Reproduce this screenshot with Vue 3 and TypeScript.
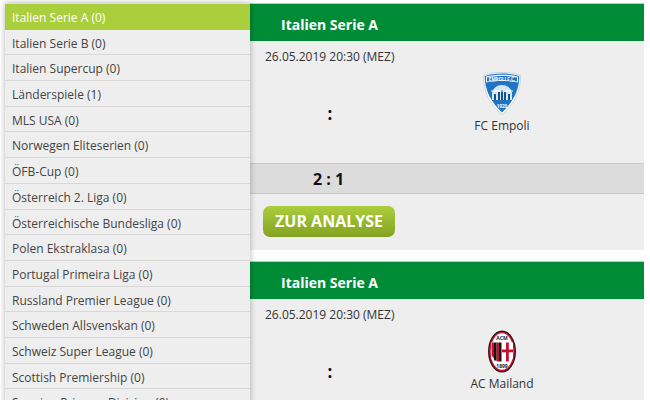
<script setup lang="ts">
const leagues: string[] = [
  'Italien Serie A (0)', 'Italien Serie B (0)', 'Italien Supercup (0)', 'Länderspiele (1)', 'MLS USA (0)',
  'Norwegen Eliteserien (0)', 'ÖFB-Cup (0)', 'Österreich 2. Liga (0)', 'Österreichische Bundesliga (0)',
  'Polen Ekstraklasa (0)', 'Portugal Primeira Liga (0)', 'Russland Premier League (0)', 'Schweden Allsvenskan (0)',
  'Schweiz Super League (0)', 'Scottish Premiership (0)', 'Spanien Primera Division (0)'
]
</script>

<template>
  <div class="page">
    <aside class="side">
      <div v-for="(l, i) in leagues" :key="l" class="row" :class="{ active: i === 0 }">{{ l }}</div>
    </aside>
    <main class="main">
      <section class="card">
        <h2 class="head">Italien Serie A</h2>
        <div class="date">26.05.2019 20:30 (MEZ)</div>
        <div class="teams">
          <div class="colon">:</div>
          <div class="team">
            <svg width="38" height="43" viewBox="0 0 38 43" class="logo">
              <path d="M19 .5 C27 .5 33 1.500 37.500 3.500 C38 19 31 33 19 42.500 C7 33 0 19 .5 3.500 C5 1.500 11 .5 19 .5Z" fill="#fff" stroke="#bfcbd6" stroke-width=".8"/>
              <path d="M19 1.500 C26 1.500 32 2.500 36.300 4.200 C36.300 19 29 31 19 40.500 C9 31 1.700 19 1.700 4.200 C6 2.500 12 1.500 19 1.500Z" fill="#1f74c4"/>
              <path d="M3 4.500 C13 2 25 2 35 4.500 L35 10.500 C25 8.500 13 8.500 3 10.500Z" fill="#fff"/>
              <path d="M4 5.500 C13 3.500 25 3.500 34 5.500 L34 9.500 C25 7.800 13 7.800 4 9.500Z" fill="#1f74c4"/>
              <text x="19" y="8.600" text-anchor="middle" class="tiny" fill="#fff">EMPOLI F.C.</text>
              <path d="M9 21 C10 16 14 13 19 13 C24 13 28 16 29 21 L29 28 L9 28Z" fill="#d5e6f5"/>
              <path d="M11 22h2v6h-2zM15 20h2v8h-2zM21 20h2v8h-2zM25 22h2v6h-2zM18 18h2v10h-2z" fill="#17548f"/>
              <rect x="8" y="18.500" width="22" height="1" fill="#fff"/>
              <text x="19" y="35.500" text-anchor="middle" class="tiny" fill="#fff">1920</text>
            </svg>
            <div class="name">FC Empoli</div>
          </div>
        </div>
        <div class="score"><span>2 : 1</span></div>
        <div class="actions"><a class="btn">ZUR ANALYSE</a></div>
      </section>
      <section class="card">
        <h2 class="head">Italien Serie A</h2>
        <div class="date">26.05.2019 20:30 (MEZ)</div>
        <div class="teams">
          <div class="colon">:</div>
          <div class="team">
            <svg width="28" height="43" viewBox="0 0 28 42" class="logo">
              <ellipse cx="14" cy="21" rx="14" ry="21" fill="#2a1414"/>
              <ellipse cx="14" cy="21" rx="12.800" ry="19.800" fill="#c8102e"/>
              <ellipse cx="14" cy="21" rx="11.300" ry="18.300" fill="#fff"/>
              <text x="14" y="9.500" text-anchor="middle" class="tiny2" fill="#222">ACM</text>
              <path d="M3 12h22v14c0 2-1 4-3 5H6c-2-1-3-3-3-5z" fill="#fff"/>
              <path d="M3.500 12h2.500v16l-2.500-3zM8.500 12h2.500v19h-2.500z" fill="#c8102e"/>
              <path d="M6 12h2.500v18H6zM11 12h2.500v19H11z" fill="#141414"/>
              <rect x="18" y="12" width="2.800" height="19" fill="#c8102e"/>
              <rect x="14" y="19" width="11" height="2.800" fill="#c8102e"/>
              <text x="14" y="37" text-anchor="middle" class="tiny2" fill="#222">1899</text>
            </svg>
            <div class="name">AC Mailand</div>
          </div>
        </div>
      </section>
    </main>
  </div>
</template>

<style>
html, body { margin: 0; background: #fff; overflow: hidden; }
</style>

<style scoped>
.page {
  width: 650px; height: 400px; overflow: hidden; display: flex; align-items: flex-start;
  font-family: "Open Sans", sans-serif; background: #fff; color: #333; box-sizing: border-box; padding-left: 5px;
}
.side {
  position: relative; z-index: 1; width: 245px; flex: none; margin-top: 3px; background: #eee; border-top: 1px solid #ddd;
  box-shadow: 0 0 6px rgba(0, 0, 0, .3);
}
.row {
  height: 25.700px; box-sizing: border-box; border-bottom: 1px solid #d8d8d8; padding: 1px 0 0 7px;
  font-size: 12px; line-height: 26px; color: #444;
}
.row.active { background: #abce3c; color: #fff; border-bottom-color: #abce3c; }
.main { flex: 1; margin: 3px 6px 0 0; display: flex; flex-direction: column; gap: 11px; }
.card { background: #eee; }
.head {
  margin: 0; height: 38px; background: #008b37; border-top: 1px solid #b8cdbd; color: #fff; font-size: 14px; font-weight: 700;
  line-height: 41px; padding-left: 31px; box-sizing: border-box;
}
.date { font-size: 12px; line-height: 16px; padding: 8px 0 0 15px; color: #333; }
.teams { display: grid; grid-template-columns: 160px 1fr; height: 98px; }
.colon { font-size: 17px; font-weight: 700; color: #111; text-align: center; line-height: 20px; padding-top: 39px; }
.team { display: flex; flex-direction: column; align-items: center; width: 160px; margin-left: 12px; padding-top: 7px; }
.logo { display: block; }
.tiny { font-size: 4.500px; font-weight: 700; font-family: "Open Sans", sans-serif; }
.tiny2 { font-size: 5px; font-weight: 700; font-family: "Open Sans", sans-serif; }
.name { font-size: 12px; line-height: 18px; color: #333; margin-top: 2px; }
.score {
  height: 31px; box-sizing: border-box; background: #dcdcdc; border-top: 1px solid #c8c8c8; border-bottom: 1px solid #c8c8c8;
  font-size: 16px; font-weight: 700; color: #111; line-height: 30px; padding-left: 63px;
}
.actions { height: 56px; padding: 12px 0 0 13px; box-sizing: border-box; }
.btn {
  display: inline-block; width: 132px; height: 31px; border-radius: 7px; text-align: center;
  background: linear-gradient(#abce3c, #84a221); color: #fff; font-size: 16px; font-weight: 700; line-height: 31px;
}
</style>
